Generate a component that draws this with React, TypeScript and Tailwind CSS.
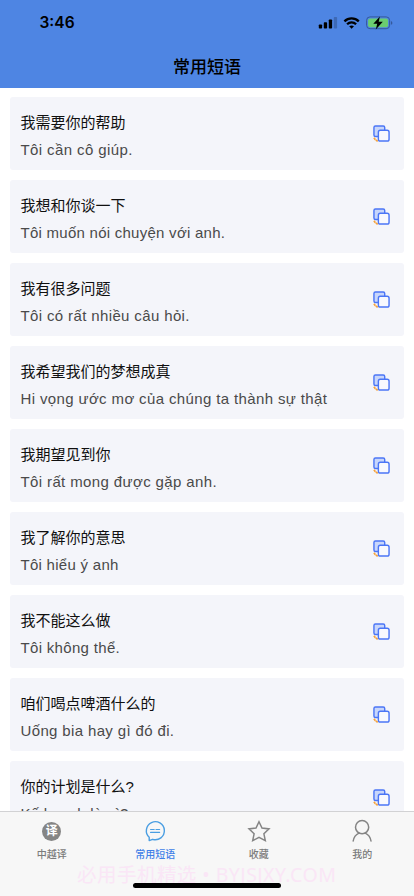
const sans = "font-['Liberation_Sans','Noto_Sans_CJK_SC',sans-serif]";

type Phrase = { zh: string; vi: string; spacing: string };

const phrases: Phrase[] = [
  { zh: "我需要你的帮助", vi: "Tôi cần cô giúp.", spacing: "tracking-[0.4px]" },
  { zh: "我想和你谈一下", vi: "Tôi muốn nói chuyện với anh.", spacing: "tracking-[0.26px]" },
  { zh: "我有很多问题", vi: "Tôi có rất nhiều câu hỏi.", spacing: "tracking-[0.37px]" },
  { zh: "我希望我们的梦想成真", vi: "Hi vọng ước mơ của chúng ta thành sự thật", spacing: "tracking-[0.37px]" },
  { zh: "我期望见到你", vi: "Tôi rất mong được gặp anh.", spacing: "tracking-[0.38px]" },
  { zh: "我了解你的意思", vi: "Tôi hiểu ý anh", spacing: "tracking-[0.28px]" },
  { zh: "我不能这么做", vi: "Tôi không thể.", spacing: "tracking-[0.32px]" },
  { zh: "咱们喝点啤酒什么的", vi: "Uống bia hay gì đó đi.", spacing: "tracking-[0.36px]" },
  { zh: "你的计划是什么?", vi: "Kế hoạch là gì?", spacing: "tracking-[0.25px]" },
];

function CopyIcon() {
  return (
    <svg width="17" height="17" viewBox="0 0 18 18" fill="none" className="shrink-0">
      <path d="M1 13.6 L2.5 15.6 M2.9 16 L5 17.2" stroke="#f5a23c" strokeWidth="1.8" />
      <rect x="1" y="1" width="11.4" height="11.2" rx="1.6" fill="#c8d6fb" stroke="#4b76f6" strokeWidth="1.5" />
      <rect x="5.7" y="5.6" width="11.3" height="11.4" rx="2" fill="#f8f9fe" stroke="#4b76f6" strokeWidth="1.5" />
    </svg>
  );
}

function StatusIcons() {
  return (
    <svg width="76" height="14" viewBox="318 16 76 14" className="mt-[2px]">
      <rect x="318.8" y="24.4" width="3.3" height="4.2" rx="0.8" />
      <rect x="323.8" y="22.2" width="3.3" height="6.4" rx="0.8" />
      <rect x="328.8" y="19.4" width="3.3" height="9.2" rx="0.8" />
      <rect x="333.8" y="17" width="3.3" height="11.6" rx="0.8" fill="#3d69b5" />
      <g fill="none" stroke="#000" strokeWidth="2.3">
        <path d="M344.4 21.3 A10.4 10.4 0 0 1 358.8 21.3" />
        <path d="M347.1 24.3 A6.4 6.4 0 0 1 356.1 24.3" />
      </g>
      <path d="M349.2 26.3 Q351.6 24.5 354 26.3 L351.6 28.8 Z" />
      <rect x="366.6" y="16.9" width="23" height="11.8" rx="3.4" fill="none" stroke="#35599b" strokeWidth="1" />
      <rect x="368.1" y="18.4" width="20" height="8.8" rx="2" fill="#6bcd70" />
      <path d="M390.9 21 Q392.4 21.5 392.4 22.9 Q392.4 24.3 390.9 24.8 Z" fill="#35599b" />
      <path d="M379.9 16.4 L373.3 23.7 H377.2 L375.8 29.4 L382.8 21.8 H378.7 Z" />
    </svg>
  );
}

export default function App() {
  return (
    <div className={`relative flex h-[896px] w-[414px] flex-col overflow-hidden bg-white ${sans}`}>
      <header className="flex h-[88px] shrink-0 flex-col bg-[#4e85e3] text-black">
        <div className="flex h-11 items-center justify-between pr-5 pl-[39.5px]">
          <span className="pt-[2px] font-['Inter',sans-serif] text-[15.5px] leading-5 font-semibold">3:46</span>
          <StatusIcons />
        </div>
        <h1 className="flex h-11 items-center justify-center pt-[3px] text-[17px] font-medium">常用短语</h1>
      </header>

      <main className="flex flex-col gap-2.5 px-[10px] pt-[9px]">
        {phrases.map((p) => (
          <article key={p.zh} className="flex h-[73px] shrink-0 items-center justify-between rounded-[3px] bg-[#f4f5fa] pr-[14px] pl-[10.5px]">
            <div className="flex flex-col pt-[5px]">
              <h2 className="pt-px text-[15px] leading-[28px] text-[#101010]">{p.zh}</h2>
              <p className={`-mt-px text-[15px] leading-[28px] whitespace-nowrap text-[#4a4a4a] ${p.spacing}`}>{p.vi}</p>
            </div>
            <CopyIcon />
          </article>
        ))}
      </main>

      <nav className="absolute inset-x-0 bottom-0 h-[85px] border-t border-[#d2d2d4] bg-[#f7f7f7]">
        <div className="grid h-[50px] grid-cols-4 text-[10px] font-medium text-[#7b7b7b]">
          <div className="flex flex-col items-center pt-[7px]">
            <span className="flex h-6 items-center">
              <span className="flex size-[19px] items-center justify-center rounded-full bg-[#858585] text-[12px] leading-none font-bold text-white">译</span>
            </span>
            <span className="mt-[5px] leading-[14px]">中越译</span>
          </div>
          <div className="flex flex-col items-center pt-[7px] text-[#3f7fe8]">
            <svg width="24" height="24" viewBox="0 0 24 24" fill="none" stroke="#4a9ee2" strokeWidth="1.4" strokeLinecap="round" strokeLinejoin="round">
              <path d="M6.2 18.3 V21.6 L9.6 20.3 A9 9 0 1 0 6.2 18.3 Z" />
              <path d="M7.6 10.5 H11.2 M13 10.5 H16.6 M7.6 13.4 H16.6" strokeWidth="1.2" />
            </svg>
            <span className="mt-[5px] leading-[14px]">常用短语</span>
          </div>
          <div className="flex flex-col items-center pt-[7px]">
            <svg width="24" height="24" viewBox="0 0 24 24" fill="none" stroke="#858585" strokeWidth="1.5" strokeLinejoin="miter">
              <path d="M12 2.8 L15 9.1 L22 9.9 L16.9 14.8 L18.3 21.7 L12 18.3 L5.7 21.7 L7.1 14.8 L2 9.9 L9 9.1 Z" />
            </svg>
            <span className="mt-[5px] leading-[14px]">收藏</span>
          </div>
          <div className="flex flex-col items-center pt-[7px]">
            <svg width="24" height="24" viewBox="0 0 24 24" fill="none" stroke="#858585" strokeWidth="1.5" strokeLinecap="round">
              <circle cx="12.1" cy="8.2" r="6.6" />
              <path d="M3.2 22 C3.8 18.2 5.9 15.5 9 14.1 M15.2 14.1 C18.3 15.5 20.4 18.2 21 22" />
            </svg>
            <span className="mt-[5px] leading-[14px]">我的</span>
          </div>
        </div>
        <div className="absolute top-[49px] left-[77px] font-['Noto_Sans','Noto_Sans_CJK_SC',sans-serif] text-[19.5px] leading-7 tracking-[0.47px] whitespace-nowrap text-[#fae6f6]">必用手机精选 • BYJSJXY.COM</div>
        <div className="absolute bottom-[8.5px] left-[133px] h-[5px] w-[148px] rounded-full bg-black" />
      </nav>
    </div>
  );
}
